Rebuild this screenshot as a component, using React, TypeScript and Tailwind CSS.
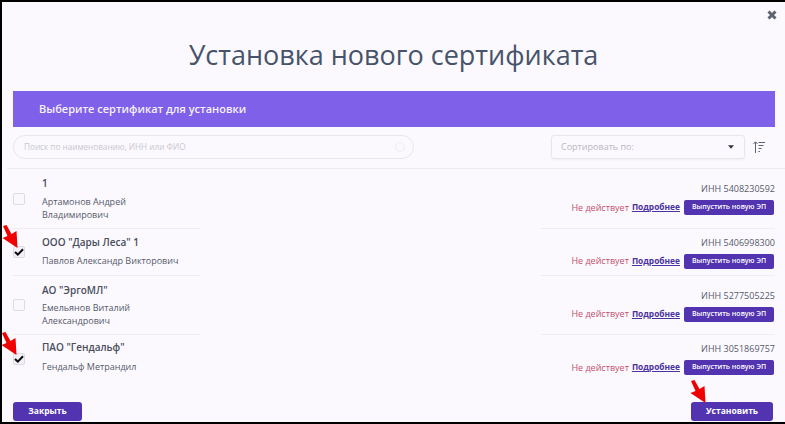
import React from "react";

const rows = [
  { name: "1", person: ["Артамонов Андрей", "Владимирович"], inn: "ИНН 5408230592", checked: false, h: "h-[59px]", nameGap: "pt-[7px]", personGap: "mt-[5px]" },
  { name: 'ООО "Дары Леса" 1', person: ["Павлов Александр Викторович"], inn: "ИНН 5406998300", checked: true, h: "h-[46px]", nameGap: "pt-[6px]", personGap: "mt-[5px]" },
  { name: 'АО "ЭргоМЛ"', person: ["Емельянов Виталий", "Александрович"], inn: "ИНН 5277505225", checked: false, h: "h-[58px]", nameGap: "pt-[7px]", personGap: "mt-[4px]" },
  { name: 'ПАО "Гендальф"', person: ["Гендальф Метрандил"], inn: "ИНН 3051869757", checked: true, h: "h-[47px]", nameGap: "pt-[5px]", personGap: "mt-[6px]" },
];

const RedArrow = ({ className }: { className: string }) => (
  <svg className={className} width="16" height="23" viewBox="0 0 16 23">
    <path d="M1 1 L4.5 0 L9.5 9 L14.5 6 L15.5 23 L0.5 13 L5.5 11 Z" fill="#f00000" />
  </svg>
);

const App = () => {
  return (
    <div className="relative h-[424px] w-[785px] overflow-hidden bg-black pb-[2px] pl-[2px] pt-[2px] font-['Open_Sans',sans-serif]">
      <div className="flex h-full flex-col bg-[#fbf9fd]">
        <div className="flex h-[89px] flex-col">
          <div className="flex justify-end pr-[8px] pt-[8px]">
            <svg width="10" height="10" viewBox="0 0 10 10">
              <path d="M1.5 1.5 L8.5 8.5 M8.5 1.5 L1.5 8.5" stroke="#5d6470" strokeWidth="3" />
            </svg>
          </div>
          <h1 className="mt-[17px] text-center text-[27px] font-normal leading-[36px] text-[#46536a]">
            Установка нового сертификата
          </h1>
        </div>

        <div className="ml-[11px] mr-[10px] flex h-[36px] items-center bg-[#7f60e8] pl-[26px] text-[11px] font-semibold text-[#f6f1fd]">
          Выберите сертификат для установки
        </div>

        <div className="ml-[11px] mr-[10px] mt-[8px] flex h-[24px] items-center">
          <div className="flex h-full w-[401px] items-center justify-between rounded-full border border-[#e8e6ec] pl-[10px] pr-[8px] text-[8.2px] text-[#c9c8d0]">
            <span>Поиск по наименованию, ИНН или ФИО</span>
            <span className="h-[10px] w-[10px] rounded-full border border-[#eeedf1]" />
          </div>
          <div className="ml-[137px] flex h-full w-[194px] items-center justify-between rounded-[3px] border border-[#e8e6ec] pl-[9px] pr-[10px] text-[9px] text-[#b9b8c2] shadow-[0_1px_2px_#f0eef3]">
            <span>Сортировать по:</span>
            <svg width="6" height="4" viewBox="0 0 7 4">
              <path d="M0 0 H7 L3.5 4 Z" fill="#33363f" />
            </svg>
          </div>
          <svg className="ml-[8px]" width="12" height="12" viewBox="0 0 12 12" fill="none" stroke="#5d6470" strokeWidth="1">
            <path d="M2.5 12 V1 M0.5 3 L2.5 0.8 L4.5 3 M5.5 1.5 H12 M5.5 4.5 H10.5 M5.5 7.5 H8.5 M5.5 10.5 H7" />
          </svg>
        </div>

        <div className="ml-[5px] mt-[9px] h-[1px] bg-[#ecebf0]" />

        <div className="flex flex-col">
          {rows.map((row, i) => (
            <div key={i} className="flex flex-col">
              <div className={`${row.h} ml-[11px] mr-[10px] flex`}>
                <div className="flex w-[29px] items-center">
                  <span
                    className={`flex h-[12px] w-[12px] items-center justify-center rounded-[2px] border ${
                      row.checked ? "border-[#dcdae2] bg-[#f3f1f6]" : "border-[#dedce3] bg-[#f9f8fb]"
                    }`}
                  >
                    {row.checked && (
                      <svg width="10" height="8" viewBox="0 0 10 8">
                        <path d="M1 4 L3.8 6.6 L9 1.2" fill="none" stroke="#0b0b10" strokeWidth="2" />
                      </svg>
                    )}
                  </span>
                </div>
                <div className={`flex flex-1 flex-col ${row.nameGap}`}>
                  <div className="text-[10px] font-semibold leading-[14px] text-[#4a4d5c]">{row.name}</div>
                  <div className={`${row.personGap} text-[9px] leading-[13px] text-[#565a6b]`}>
                    {row.person.map((p) => (
                      <div key={p}>{p}</div>
                    ))}
                  </div>
                </div>
                <div className="flex flex-col items-end justify-center">
                  <div className="text-[9px] leading-[14px] text-[#565a6b]">{row.inn}</div>
                  <div className="mr-[1px] mt-[4px] flex items-center">
                    <span className="text-[9px] text-[#c2506c]">Не действует</span>
                    <a className="ml-[3px] text-[8.4px] font-bold text-[#4a33a0] underline">Подробнее</a>
                    <button className="ml-[4px] h-[15px] w-[90px] rounded-[2px] bg-[#5233b0] text-[7px] font-semibold text-white">
                      Выпустить новую ЭП
                    </button>
                  </div>
                </div>
              </div>
              {i < rows.length - 1 && (
                <div className="ml-[11px] mr-[10px] flex justify-between">
                  <div className="h-[1px] w-[187px] bg-[#efedf2]" />
                  <div className="h-[1px] w-[234px] bg-[#efedf2]" />
                </div>
              )}
            </div>
          ))}
        </div>

        <div className="mb-[1px] ml-[11px] mr-[12px] mt-auto flex justify-between">
          <button className="h-[19px] w-[69px] rounded-[3px] bg-[#5233b0] text-[8.5px] font-bold text-white">Закрыть</button>
          <button className="h-[19px] w-[82px] rounded-[3px] bg-[#5233b0] text-[8.5px] font-bold text-white">Установить</button>
        </div>
      </div>

      <RedArrow className="absolute left-[2px] top-[225px]" />
      <RedArrow className="absolute left-[1px] top-[332px]" />
      <RedArrow className="absolute left-[690px] top-[380px]" />
    </div>
  );
};

export default App;
